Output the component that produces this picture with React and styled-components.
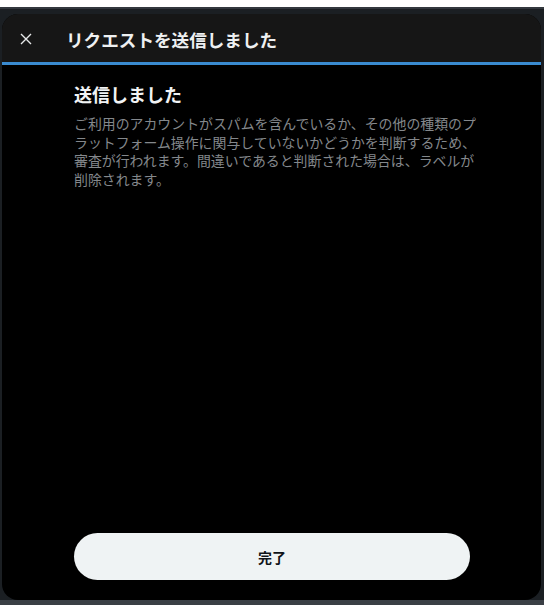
import React from "react";
import styled, { createGlobalStyle } from "styled-components";

const Global = createGlobalStyle`
  html, body { margin: 0; padding: 0; background: #ffffff; }
  body { font-family: "Noto Sans CJK JP", "Noto Sans", sans-serif; }
  * { box-sizing: border-box; }
`;

const Backdrop = styled.div`
  margin-top: 7px;
  height: 598px;
  background: #1b1f23;
  border-top: 2px solid #33383e;
  border-bottom: 5px solid #3a3f45;
  padding: 5px 3px 0 2px;
  display: flex;
`;

const Dialog = styled.div`
  flex: 1;
  height: 586px;
  background: #000;
  border-radius: 16px;
  overflow: hidden;
  display: flex;
  flex-direction: column;
`;

const Header = styled.div`
  height: 48px;
  flex: none;
  background: #161616;
  border-bottom: 3px solid #3a8bd0;
  display: flex;
  align-items: center;
  padding-left: 16px;
  gap: 32px;
  box-sizing: content-box;
`;

const CloseBtn = styled.button`
  width: 16px;
  height: 16px;
  padding: 0;
  border: none;
  background: transparent;
  display: flex;
  align-items: center;
  justify-content: center;
  margin-top: 2px;
`;

const Title = styled.h1`
  margin: 0;
  font-size: 17.6px;
  font-weight: 700;
  color: #eef0f1;
  line-height: 24px;
  margin-top: 3px;
`;

const Body = styled.div`
  flex: 1;
  display: flex;
  flex-direction: column;
  padding: 17px 71px 20px 72px;
`;

const Heading = styled.h2`
  margin: 0 0 8px;
  font-size: 18px;
  font-weight: 700;
  line-height: 24px;
  color: #f1f3f4;
`;

const Text = styled.p`
  margin: 0;
  width: 412px;
  font-size: 13.9px;
  line-height: 18.7px;
  color: #84888c;
`;

const DoneButton = styled.button`
  margin-top: auto;
  height: 47px;
  width: 100%;
  border: none;
  border-radius: 24px;
  background: #eff3f4;
  color: #0f1419;
  font-family: inherit;
  font-size: 14px;
  font-weight: 700;
  cursor: pointer;
`;

export default function App() {
  return (
    <>
      <Global />
      <Backdrop>
        <Dialog>
          <Header>
            <CloseBtn aria-label="閉じる">
              <svg width="12" height="12" viewBox="0 0 12 12">
                <path d="M1 1 L11 11 M11 1 L1 11" stroke="#e7e9ea" strokeWidth="1.4" fill="none" />
              </svg>
            </CloseBtn>
            <Title>リクエストを送信しました</Title>
          </Header>
          <Body>
            <Heading>送信しました</Heading>
            <Text>
              ご利用のアカウントがスパムを含んでいるか、その他の種類のプラットフォーム操作に関与していないかどうかを判断するため、審査が行われます。間違いであると判断された場合は、ラベルが削除されます。
            </Text>
            <DoneButton>完了</DoneButton>
          </Body>
        </Dialog>
      </Backdrop>
    </>
  );
}
